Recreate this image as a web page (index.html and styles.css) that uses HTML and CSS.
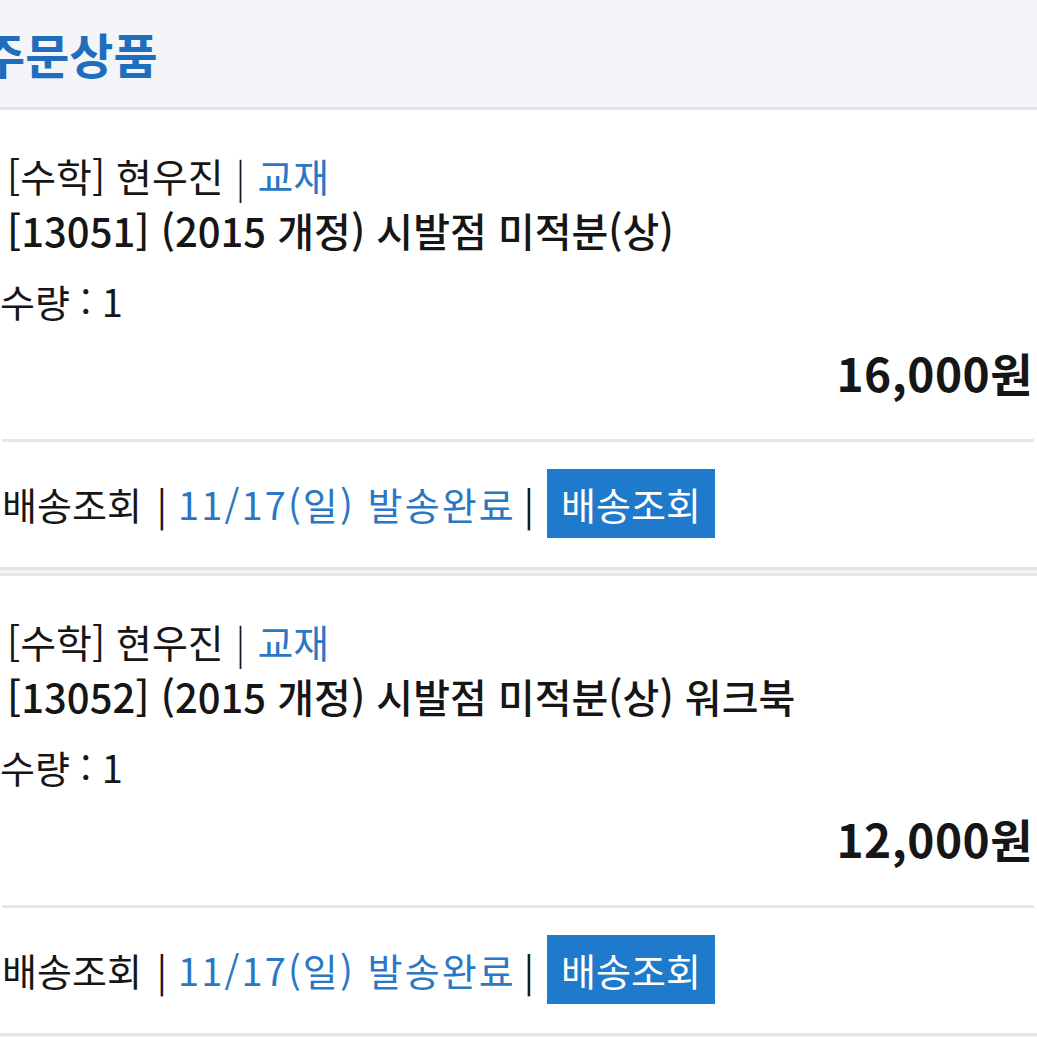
FILE: index.html
```html
<!DOCTYPE html>
<html lang="ko">
<head>
<meta charset="utf-8">
<link rel="stylesheet" href="styles.css">
</head>
<body>
<div class="header"><h1 class="title">주문상품</h1></div>

<section class="item">
  <div class="meta">[수학] 현우진 <span class="sep">|</span> <span class="blue">교재</span></div>
  <div class="name">[13051] (2015 개정) 시발점 미적분(상)</div>
  <div class="qty">수량 : 1</div>
  <div class="price">16,000원</div>
  <div class="rule"></div>
  <div class="ship">
    <span>배송조회</span><span class="bar first">|</span><span class="blue date">11/17(일) 발송완료</span><span class="bar second">|</span><span class="btn">배송조회</span>
  </div>
</section>
<div class="divider"></div>

<section class="item">
  <div class="meta">[수학] 현우진 <span class="sep">|</span> <span class="blue">교재</span></div>
  <div class="name">[13052] (2015 개정) 시발점 미적분(상) 워크북</div>
  <div class="qty">수량 : 1</div>
  <div class="price">12,000원</div>
  <div class="rule"></div>
  <div class="ship">
    <span>배송조회</span><span class="bar first">|</span><span class="blue date">11/17(일) 발송완료</span><span class="bar second">|</span><span class="btn">배송조회</span>
  </div>
</section>
<div class="divider"></div>
</body>
</html>
```

FILE: styles.css
```css
html, body {
  margin: 0;
  padding: 0;
  background: #ffffff;
  font-family: "Noto Sans CJK KR", "Noto Sans", sans-serif;
  color: #161616;
  overflow: hidden;
}

.header {
  height: 107px;
  background: #f4f5f9;
  border-bottom: 3px solid #e2e3e6;
  display: flex;
  align-items: center;
}

.title {
  margin: 0;
  font-size: 48px;
  font-weight: 700;
  color: #1e6ebd;
  text-indent: -19px;
  line-height: 1;
  padding-bottom: 2px;
  white-space: nowrap;
}

.item {
  padding: 38px 4px 0 4px;
}

.meta, .name, .qty, .price {
  line-height: 55px;
  white-space: nowrap;
}

.meta {
  padding-left: 3px;
  font-size: 39px;
  font-weight: 400;
}

.sep {
  font-weight: 300;
  margin: 0 1px;
}

.blue {
  color: #2a78c3;
}

.name {
  padding-left: 3px;
  font-size: 40px;
  font-weight: 500;
  letter-spacing: 0;
}

.qty {
  margin-top: 15px;
  margin-left: -4px;
  font-size: 38px;
}

.price {
  margin-top: 17px;
  text-align: right;
  font-size: 46px;
  font-weight: 700;
  letter-spacing: 0.5px;
  padding-right: 0;
}

.rule {
  margin: 39px -1px 0 -2px;
  height: 3px;
  background: #e6e6e6;
}

.ship {
  display: flex;
  align-items: center;
  margin-top: 27px;
  padding-bottom: 29px;
  font-size: 38px;
  white-space: nowrap;
  margin-left: -2px;
}

.date {
  letter-spacing: 2.1px;
}

.bar {
  font-weight: 400;
}

.bar.first {
  margin: 0 11px 0 15px;
}

.bar.second {
  margin: 0 13px 0 8px;
}

.btn {
  background: #1f7acb;
  color: #ffffff;
  height: 69px;
  line-height: 69px;
  padding: 0 14px;
}

.divider {
  height: 3px;
  background: #f3f3f3;
  border-top: 3px solid #e3e3e3;
  border-bottom: 3px solid #e6e6e6;
}
```
